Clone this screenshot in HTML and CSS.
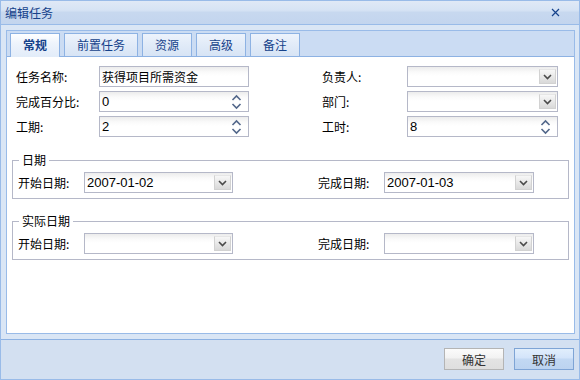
FILE: index.html
```html
<!DOCTYPE html>
<html lang="zh-CN">
<head>
    <meta charset="UTF-8">
    <title>编辑任务</title>
    <link rel="stylesheet" href="styles.css">
</head>
<body>
    <div class="window">
        <div class="win-header">
            <span class="win-title">编辑任务</span>
            <svg class="win-close" width="9" height="9" viewBox="0 0 9 9">
                <path d="M1 1 L8 8 M8 1 L1 8" stroke="#15428b" stroke-width="1.2" fill="none"/>
            </svg>
        </div>
        <div class="win-body">
            <div class="tabpanel">
                <div class="tabstrip">
                    <div class="tab active">常规</div>
                    <div class="tab">前置任务</div>
                    <div class="tab">资源</div>
                    <div class="tab">高级</div>
                    <div class="tab">备注</div>
                </div>
                <div class="tab-body">
                    <div class="form-grid">
                        <label class="lbl">任务名称:</label>
                        <div class="field"><span class="val">获得项目所需资金</span></div>
                        <label class="lbl rlabel">负责人:</label>
                        <div class="field combo"><span class="val"></span><span class="trigger"><svg width="9" height="6" viewBox="0 0 9 6"><path d="M1 1 L4.5 4.5 L8 1" stroke="#4a4a4a" stroke-width="1.6" fill="none"/></svg></span></div>

                        <label class="lbl">完成百分比:</label>
                        <div class="field spin"><span class="val num">0</span><svg class="spinner" width="11" height="16" viewBox="0 0 11 16"><path d="M1.5 6 L5.5 2 L9.5 6" stroke="#52678a" stroke-width="1.6" fill="none"/><path d="M1.5 10 L5.5 14 L9.5 10" stroke="#52678a" stroke-width="1.6" fill="none"/></svg></div>
                        <label class="lbl rlabel">部门:</label>
                        <div class="field combo"><span class="val"></span><span class="trigger"><svg width="9" height="6" viewBox="0 0 9 6"><path d="M1 1 L4.5 4.5 L8 1" stroke="#4a4a4a" stroke-width="1.6" fill="none"/></svg></span></div>

                        <label class="lbl">工期:</label>
                        <div class="field spin"><span class="val num">2</span><svg class="spinner" width="11" height="16" viewBox="0 0 11 16"><path d="M1.5 6 L5.5 2 L9.5 6" stroke="#52678a" stroke-width="1.6" fill="none"/><path d="M1.5 10 L5.5 14 L9.5 10" stroke="#52678a" stroke-width="1.6" fill="none"/></svg></div>
                        <label class="lbl rlabel">工时:</label>
                        <div class="field spin"><span class="val num">8</span><svg class="spinner" width="11" height="16" viewBox="0 0 11 16"><path d="M1.5 6 L5.5 2 L9.5 6" stroke="#52678a" stroke-width="1.6" fill="none"/><path d="M1.5 10 L5.5 14 L9.5 10" stroke="#52678a" stroke-width="1.6" fill="none"/></svg></div>
                    </div>

                    <fieldset class="group group-first">
                        <legend>日期</legend>
                        <div class="group-row">
                            <label class="lbl glabel">开始日期:</label>
                            <div class="field combo date"><span class="val num">2007-01-02</span><span class="trigger"><svg width="9" height="6" viewBox="0 0 9 6"><path d="M1 1 L4.5 4.5 L8 1" stroke="#4a4a4a" stroke-width="1.6" fill="none"/></svg></span></div>
                            <label class="lbl glabel gap">完成日期:</label>
                            <div class="field combo date wide"><span class="val num">2007-01-03</span><span class="trigger"><svg width="9" height="6" viewBox="0 0 9 6"><path d="M1 1 L4.5 4.5 L8 1" stroke="#4a4a4a" stroke-width="1.6" fill="none"/></svg></span></div>
                        </div>
                    </fieldset>

                    <fieldset class="group group-second">
                        <legend>实际日期</legend>
                        <div class="group-row">
                            <label class="lbl glabel">开始日期:</label>
                            <div class="field combo date"><span class="val"></span><span class="trigger"><svg width="9" height="6" viewBox="0 0 9 6"><path d="M1 1 L4.5 4.5 L8 1" stroke="#4a4a4a" stroke-width="1.6" fill="none"/></svg></span></div>
                            <label class="lbl glabel gap">完成日期:</label>
                            <div class="field combo date wide"><span class="val"></span><span class="trigger"><svg width="9" height="6" viewBox="0 0 9 6"><path d="M1 1 L4.5 4.5 L8 1" stroke="#4a4a4a" stroke-width="1.6" fill="none"/></svg></span></div>
                        </div>
                    </fieldset>
                </div>
            </div>
        </div>
        <div class="win-footer">
            <button class="btn">确定</button>
            <button class="btn btn-focus">取消</button>
        </div>
    </div>
</body>
</html>
```

FILE: styles.css
```css
body {
    margin: 0;
    padding: 0;
    background: #fff;
    font-family: "Noto Sans CJK SC", "Liberation Sans", sans-serif;
    font-size: 12px;
    color: #000;
}

.window {
    width: 580px;
    height: 380px;
    box-sizing: border-box;
    border: 1px solid #99bbe8;
    background: #dae6f5;
    display: flex;
    flex-direction: column;
}

.win-header {
    height: 23px;
    border-bottom: 1px solid #99bbe8;
    background: linear-gradient(to bottom, #e0e9f6 0, #d6e3f4 40%, #c7d8ef 50%, #c3d5ee 100%);
    display: flex;
    align-items: center;
    justify-content: space-between;
    padding: 0 19px 0 4px;
}

.win-title {
    color: #15428b;
    font-size: 12px;
    line-height: 14px;
}

.win-close {
    display: block;
}

.win-body {
    flex: 1;
    padding: 5px 4px 5px 5px;
    display: flex;
}

.tabpanel {
    flex: 1;
    border: 1px solid #99bbe8;
    display: flex;
    flex-direction: column;
}

.tabstrip {
    height: 23px;
    padding: 2px 0 0 3px;
    background: #cbdcf3;
    border-bottom: 1px solid #8db2e3;
    display: flex;
    align-items: flex-end;
    gap: 4px;
}

.tab {
    height: 22px;
    padding: 0 12px;
    border: 1px solid #8db2e3;
    border-bottom: none;
    background: linear-gradient(to bottom, #edf3fc 0, #e1ebf8 50%, #d7e4f5 100%);
    color: #15428b;
    line-height: 22px;
}

.tab.active {
    height: 23px;
    margin-bottom: -1px;
    padding: 0 12px;
    background: linear-gradient(to bottom, #ffffff 0, #eef4fc 40%, #e2ecf9 100%);
    font-weight: bold;
}

.tab-body {
    flex: 1;
    background: #fff;
    padding: 9px 5px 0 5px;
}

.form-grid {
    display: grid;
    grid-template-columns: 83px 150px 73px 85px 151px;
    grid-auto-rows: 21px;
    row-gap: 4px;
    padding-left: 4px;
}

.lbl {
    align-self: center;
    line-height: 14px;
    white-space: nowrap;
}

.rlabel {
    grid-column: 4;
}

.field {
    box-sizing: border-box;
    height: 21px;
    border: 1px solid #b5b8c8;
    background: linear-gradient(to bottom, #ececec 0, #fafafa 5px, #ffffff 9px);
    display: flex;
    align-items: center;
}

.val {
    flex: 1;
    padding-left: 2px;
    line-height: 15px;
    white-space: nowrap;
}

.val.num {
    font-family: "Liberation Sans", "Noto Sans CJK SC", sans-serif;
    font-size: 13px;
}

.spinner {
    display: block;
    margin-right: 6px;
}

.trigger {
    box-sizing: border-box;
    width: 17px;
    height: 15px;
    margin-right: 1px;
    border: 1px solid #d2d2d2;
    border-top-color: #e6e6e6;
    background: linear-gradient(to bottom, #f7f7f7 0, #e8e8e8 50%, #d9d9d9 100%);
    display: flex;
    align-items: center;
    justify-content: center;
}

.trigger svg {
    display: block;
}

.group {
    margin: 0;
    border: 1px solid #b5b8c8;
    padding: 5px 5px 5px 5px;
}

.group-first {
    margin-top: 16px;
}

.group-second {
    margin-top: 15px;
}

.group legend {
    padding: 0 3px;
    margin-left: 1px;
    line-height: 14px;
}

.group-row {
    display: flex;
    align-items: center;
}

.glabel {
    width: 66px;
}

.gap {
    margin-left: 85px;
}

.date {
    width: 149px;
}

.date.wide {
    width: 150px;
}

.win-footer {
    height: 31px;
    border-top: 1px solid #8db2e3;
    background: #d3e0f1;
    padding: 8px 5px 0 0;
    display: flex;
    justify-content: flex-end;
    align-items: flex-start;
    gap: 10px;
}

.btn {
    width: 60px;
    height: 22px;
    padding: 0;
    font-family: "Noto Sans CJK SC", sans-serif;
    font-size: 12px;
    color: #333;
    border: 1px solid #b4b4b4;
    background: linear-gradient(to bottom, #fbfbfb 0, #f2f2f2 45%, #e3e3e3 50%, #dedede 100%);
}

.btn-focus {
    border-color: #7ea4d5;
    background: linear-gradient(to bottom, #e1eefc 0, #d3e4fa 45%, #c2d8f3 50%, #bcd3f0 100%);
}
```
